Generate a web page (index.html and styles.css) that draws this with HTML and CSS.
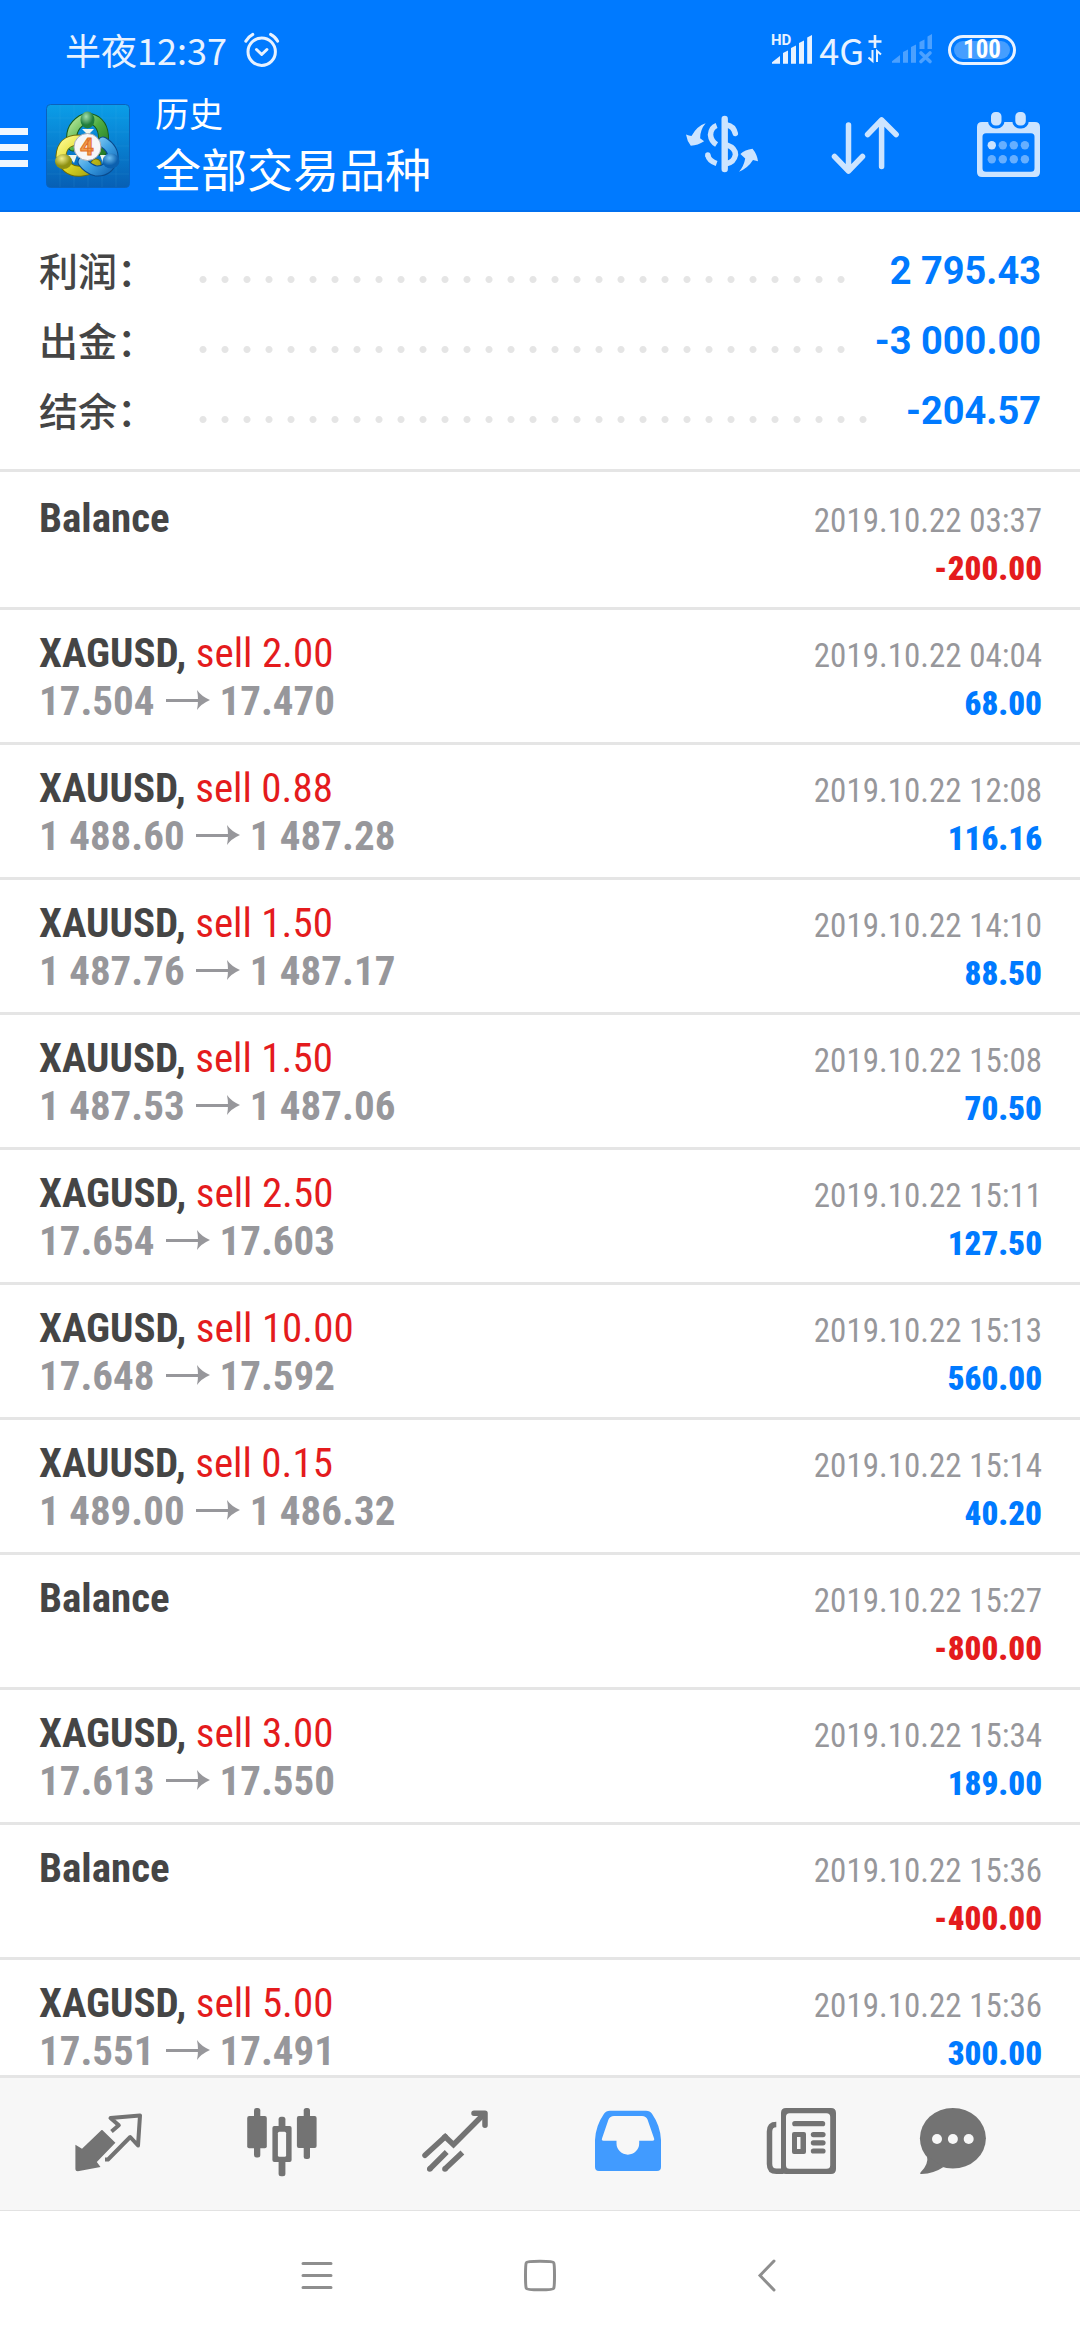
FILE: index.html
```html
<!DOCTYPE html>
<html lang="zh-CN">
<head>
<meta charset="utf-8">
<meta name="viewport" content="width=device-width, initial-scale=1">
<title>历史 - 全部交易品种</title>
<link rel="stylesheet" href="styles.css">
</head>
<body>
<svg class="defs" aria-hidden="true">
  <symbol id="arrow" viewBox="0 0 44 20"><path d="M0 9h34v3H0z"/><path d="M31 0q4 6 13 10q-9 4-13 10q2-10 0-20z"/></symbol>
</svg>

<header class="top">
  <div class="status">
    <span class="clock">半夜12:37</span>
    <svg class="alarm" width="36" height="36" viewBox="0 0 36 36" fill="none" stroke="#e8f2ff" stroke-width="3" stroke-linecap="round" stroke-linejoin="round">
      <circle cx="17.7" cy="19.7" r="13.7"/><path d="M1.8 9.2Q4 5 8.8 2.4M26.6 2.4Q31.500 5 33.600 9.200M12.500 17.500l5.200 5 5.200-5"/>
    </svg>
    <div class="signals">
      <svg class="signal" width="42" height="34" viewBox="0 -2 42 34" fill="#e8f2ff">
        <text class="hd" x="0" y="10">HD</text>
        <path d="M1 28.700v-1.500l8-6.200v7.700zM12 28.700V18l5-2.500v13.200zM20 28.700V13l5-2.500v18.200zM28 28.700V8l5-2.500v23.200zM36.200 28.700V2.500L41 0v28.700z"/>
      </svg>
      <span class="net">4G</span>
      <svg class="updown" width="14" height="32" viewBox="0 0 14 32" fill="none" stroke="#e8f2ff">
        <path stroke-width="2.600" d="M7 1v13M0.500 7.500h13"/><path stroke-width="2" d="M4.500 16v11l-4-3.500M9 28V17l4 3.500"/>
      </svg>
      <svg class="nosim" width="42" height="32" viewBox="0 0 42 32" fill="#4ca1ff">
        <path d="M0 28.700v-1.500l8-6.200v7.700zM11 28.700V18l5-2.500v13.200zM19 28.700V13l5-2.500v18.200zM27.500 15V8l5-2.500V15zM35.500 15V2.500L40 0v15z"/>
        <path d="M29 19l9 8.500M38 19l-9 8.500" fill="none" stroke="#4ca1ff" stroke-width="3.600" stroke-linecap="round"/>
      </svg>
      <span class="battery"><span class="charge">100</span></span>
    </div>
  </div>

  <div class="appbar">
    <button class="menu" aria-label="菜单"><i></i><i></i><i></i></button>
    <svg class="logo" width="84" height="84" viewBox="0 0 84 84">
      <defs>
        <linearGradient id="sky" x2="0" y2="1"><stop offset="0" stop-color="#0b9ee8"/><stop offset=".5" stop-color="#087fd0"/><stop offset="1" stop-color="#075fb4"/></linearGradient>
        <linearGradient id="gr" x2="1" y2="1"><stop offset="0" stop-color="#b4e69a"/><stop offset=".5" stop-color="#4fae42"/><stop offset="1" stop-color="#267d28"/></linearGradient>
        <linearGradient id="ye" x2="1" y2="1"><stop offset="0" stop-color="#fbf88a"/><stop offset=".5" stop-color="#e0d926"/><stop offset="1" stop-color="#a5a210"/></linearGradient>
        <linearGradient id="bl" x2="1" y2="1"><stop offset="0" stop-color="#a5dbf8"/><stop offset=".5" stop-color="#3fa2e4"/><stop offset="1" stop-color="#1268b8"/></linearGradient>
        <radialGradient id="gh" cx=".4" cy=".3"><stop offset="0" stop-color="#a2dfae"/><stop offset="1" stop-color="#1f7d3c"/></radialGradient>
        <radialGradient id="yh" cx=".4" cy=".3"><stop offset="0" stop-color="#f2f08c"/><stop offset="1" stop-color="#8f9112"/></radialGradient>
        <radialGradient id="bh" cx=".4" cy=".3"><stop offset="0" stop-color="#6fc0f2"/><stop offset="1" stop-color="#0c60ae"/></radialGradient>
      </defs>
      <rect x=".5" y=".5" width="83" height="83" rx="4" fill="url(#sky)" stroke="#0a62bd"/>
      <path d="M14 1v82M28 1v82M42 1v82M56 1v82M70 1v82M1 14h82M1 28h82M1 42h82M1 56h82M1 70h82" stroke="#5ab8f0" stroke-opacity=".12"/>
      <g fill="none" stroke-linecap="round">
        <path d="M27 42Q22 25 36 16Q42 12 50 17Q61 25 56 47" stroke="#175c1c" stroke-width="11"/>
        <path d="M27 42Q22 25 36 16Q42 12 50 17Q61 25 56 47" stroke="url(#gr)" stroke-width="9"/>
        <path d="M33 36Q16 36 15 52Q20 69 36 67Q46 66 50 60" stroke="#706d06" stroke-width="11"/>
        <path d="M33 36Q16 36 15 52Q20 69 36 67Q46 66 50 60" stroke="url(#ye)" stroke-width="9"/>
        <path d="M57 38Q68 45 67 55Q62 68 50 67Q42 65 37 58" stroke="#0a4a8c" stroke-width="11"/>
        <path d="M57 38Q68 45 67 55Q62 68 50 67Q42 65 37 58" stroke="url(#bl)" stroke-width="9"/>
      </g>
      <path d="M36 25h12l-6 6zM22 51l9 0-3 8zM62 51h-8l3 8z" fill="#eef6ee"/>
      <ellipse cx="41.500" cy="16" rx="7" ry="8.500" fill="url(#gh)"/>
      <ellipse cx="17.500" cy="57.500" rx="8.500" ry="7.500" fill="url(#yh)"/>
      <ellipse cx="65" cy="57" rx="8.500" ry="7.500" fill="url(#bh)"/>
      <circle cx="41.500" cy="43" r="13.500" fill="#f6f6f8" stroke="#a9acb4"/>
      <text class="four" x="41" y="51" text-anchor="middle">4</text>
    </svg>
    <div class="title">
      <h1>历史</h1>
      <p>全部交易品种</p>
    </div>
    <div class="actions">
      <button aria-label="货币">
        <svg width="143" height="120" viewBox="0 0 143 120" fill="#cce4ff">
          <path d="M35 42.500q3 1 5.500 1.500Q46 34 54.600 31.300Q49 38 49.100 46.300l4 3Q47 53.500 39.800 53.700Q36 49 35 42.500z"/>
          <path d="M88 79.700Q93 74 94.200 66.500L89.400 62Q94 57.500 101.500 56.700Q106 62 107 69.300L102 68Q97 76 88 79.700z"/>
          <path d="M65.600 33.500Q60 35.500 59.500 42.700Q60 49 65.600 52.500M56.700 63Q58 69 65.600 71.500" fill="none" stroke="#cce4ff" stroke-width="5.500"/>
          <circle cx="56.800" cy="63" r="2.700"/>
          <path d="M73.700 27v50" stroke="#cce4ff" stroke-width="6.400" stroke-linecap="round"/>
          <path d="M76 33Q82.500 34 84.300 41.500M76 53Q84.500 56 84.500 62.700Q83 70 76 71.500" fill="none" stroke="#cce4ff" stroke-width="5.500" stroke-linecap="round"/>
        </svg>
      </button>
      <button aria-label="排序">
        <svg width="143" height="120" viewBox="0 0 143 120" fill="none" stroke="#cce4ff" stroke-width="5.500" stroke-linecap="round" stroke-linejoin="round">
          <path d="M54.500 33v46M40.500 64.500l14 14.500 14-14.500M87.600 74.500V28M73.600 42.500L87.600 28l14.500 14.500"/>
        </svg>
      </button>
      <button aria-label="日历">
        <svg width="143" height="120" viewBox="0 0 143 120" fill="#cce4ff">
          <path fill-rule="evenodd" d="M45 30h53q5 0 5 5v45q0 5-5 5H45q-5 0-5-5V35q0-5 5-5zM49 41.300q-3.500 0-3.500 3.500v31.500q0 3.500 3.500 3.500h45q3.500 0 3.500-3.500V44.800q0-3.500-3.500-3.500z"/>
          <rect x="52.500" y="18.500" width="13.500" height="16.500" rx="6" stroke="#007aff" stroke-width="3"/>
          <rect x="76.800" y="18.500" width="13.500" height="16.500" rx="6" stroke="#007aff" stroke-width="3"/>
          <circle cx="54.800" cy="53.300" r="4.200"/>
          <g fill="#66afff"><circle cx="65.800" cy="53.300" r="4.200"/><circle cx="76.800" cy="53.300" r="4.200"/><circle cx="87.900" cy="53.300" r="4.200"/><circle cx="54.800" cy="67.300" r="4.200"/><circle cx="65.800" cy="67.300" r="4.200"/><circle cx="76.800" cy="67.300" r="4.200"/><circle cx="87.900" cy="67.300" r="4.200"/></g>
        </svg>
      </button>
    </div>
  </div>
</header>

<main class="history">
  <dl class="summary">
    <div><dt>利润：</dt><dd><span class="dots"></span><b>2 795.43</b></dd></div>
    <div><dt>出金：</dt><dd><span class="dots"></span><b>-3 000.00</b></dd></div>
    <div><dt>结余：</dt><dd><span class="dots"></span><b>-204.57</b></dd></div>
  </dl>

  <ul class="deals">
    <li><p><b>Balance</b><time>2019.10.22 03:37</time></p><p class="out"><span>&nbsp;</span><strong class="loss">-200.00</strong></p></li>
    <li><p><span><b>XAGUSD,</b> <em>sell 2.00</em></span><time>2019.10.22 04:04</time></p><p class="out"><span>17.504<svg><use href="#arrow"/></svg>17.470</span><strong>68.00</strong></p></li>
    <li><p><span><b>XAUUSD,</b> <em>sell 0.88</em></span><time>2019.10.22 12:08</time></p><p class="out"><span>1 488.60<svg><use href="#arrow"/></svg>1 487.28</span><strong>116.16</strong></p></li>
    <li><p><span><b>XAUUSD,</b> <em>sell 1.50</em></span><time>2019.10.22 14:10</time></p><p class="out"><span>1 487.76<svg><use href="#arrow"/></svg>1 487.17</span><strong>88.50</strong></p></li>
    <li><p><span><b>XAUUSD,</b> <em>sell 1.50</em></span><time>2019.10.22 15:08</time></p><p class="out"><span>1 487.53<svg><use href="#arrow"/></svg>1 487.06</span><strong>70.50</strong></p></li>
    <li><p><span><b>XAGUSD,</b> <em>sell 2.50</em></span><time>2019.10.22 15:11</time></p><p class="out"><span>17.654<svg><use href="#arrow"/></svg>17.603</span><strong>127.50</strong></p></li>
    <li><p><span><b>XAGUSD,</b> <em>sell 10.00</em></span><time>2019.10.22 15:13</time></p><p class="out"><span>17.648<svg><use href="#arrow"/></svg>17.592</span><strong>560.00</strong></p></li>
    <li><p><span><b>XAUUSD,</b> <em>sell 0.15</em></span><time>2019.10.22 15:14</time></p><p class="out"><span>1 489.00<svg><use href="#arrow"/></svg>1 486.32</span><strong>40.20</strong></p></li>
    <li><p><b>Balance</b><time>2019.10.22 15:27</time></p><p class="out"><span>&nbsp;</span><strong class="loss">-800.00</strong></p></li>
    <li><p><span><b>XAGUSD,</b> <em>sell 3.00</em></span><time>2019.10.22 15:34</time></p><p class="out"><span>17.613<svg><use href="#arrow"/></svg>17.550</span><strong>189.00</strong></p></li>
    <li><p><b>Balance</b><time>2019.10.22 15:36</time></p><p class="out"><span>&nbsp;</span><strong class="loss">-400.00</strong></p></li>
    <li><p><span><b>XAGUSD,</b> <em>sell 5.00</em></span><time>2019.10.22 15:36</time></p><p class="out"><span>17.551<svg><use href="#arrow"/></svg>17.491</span><strong>300.00</strong></p></li>
  </ul>
</main>

<nav class="tabs">
  <button aria-label="行情">
    <svg viewBox="0 0 90 90">
      <path d="M38.300 31L51.400 43.700 32.800 63l3.700 5L13.800 72.300q-2.400 0-2.400-2V45.700L18 49.700 36.500 32q1-1.500 1.800-1z" fill="#737373"/>
      <path d="M47.500 32.500l7.300-6.200-8.300-7.300 29.500-2.500-2 30-7.800-8.500L44 60.500l-3 0" fill="none" stroke="#737373" stroke-width="4" stroke-linejoin="round"/>
    </svg>
  </button>
  <button aria-label="图表">
    <svg viewBox="0 0 90 90" fill="#737373">
      <rect x="17" y="9" width="6.300" height="49.500" rx="2.500"/><rect x="10.200" y="17" width="19.600" height="32.300" rx="2"/>
      <rect x="66.700" y="9" width="6.300" height="51" rx="2.500"/><rect x="59.900" y="17" width="19.700" height="32" rx="2"/>
      <rect x="41.600" y="17.700" width="6.800" height="59.500" rx="2.500"/><rect x="35.400" y="27" width="19.200" height="36" rx="2"/>
      <rect x="40.900" y="32.700" width="8.200" height="25" rx="1.500" fill="#f7f7f7"/>
    </svg>
  </button>
  <button aria-label="交易">
    <svg viewBox="0 0 90 90" fill="none" stroke="#737373" stroke-width="5.500">
      <path stroke-linecap="round" d="M15 56.300l20.200-18.600"/>
      <path d="M33.500 39.300l1.700-1.600 8.300 8L73.500 15.500"/>
      <path stroke-linecap="round" stroke-linejoin="round" d="M64 14.300h11v12"/>
      <path d="M19.700 70l17-17M34.900 70l17.500-16.500"/><path stroke-linecap="round" d="M19.700 70h.1M34.900 70h.1"/>
    </svg>
  </button>
  <button aria-label="历史" aria-current="page">
    <svg viewBox="0 0 90 90" fill="#419bff">
      <path fill-rule="evenodd" d="M27 11.700h36q4 0 6 3Q77.500 27 78 41v27q0 4-4 4H16q-4 0-4-4V41Q12.500 27 21 14.700q2-3 6-3zM31 17q-4 0-5.500 3.500L19 39.500q-.7 2.200 1.500 2.200h13v2.600a11.300 11.300 0 0 0 22.700 0v-2.600h13.300q2.200 0 1.600-2.200L64.500 20.500Q63 17 59 17z"/>
    </svg>
  </button>
  <button aria-label="新闻">
    <svg viewBox="0 0 90 90" fill="#737373">
      <path fill-rule="evenodd" d="M30 9h45q5 0 5 5v56q0 5-5 5H30q-5 0-5-5V14q0-5 5-5zM33.500 14.300q-3.500 0-3.500 3.500v48.400q0 3.500 3.500 3.500h37q3.700 0 3.700-3.500V17.800q0-3.500-3.700-3.500z"/>
      <path d="M20.300 25.500q-6.800 0-6.800 7V65q0 7.300 7 7.300h7" fill="none" stroke="#737373" stroke-width="5.500"/>
      <rect x="36.200" y="22" width="33" height="5.300" rx="2.600"/>
      <path fill-rule="evenodd" d="M38 33h10q2 0 2 2v18q0 2-2 2H38q-2 0-2-2V35q0-2 2-2zM41 38v12h3.500V38z"/>
      <rect x="54.800" y="33" width="14.800" height="5.200" rx="2.600"/><rect x="54.800" y="41.200" width="14.800" height="5.200" rx="2.600"/><rect x="54.800" y="49.400" width="14.800" height="5.200" rx="2.600"/>
    </svg>
  </button>
  <button aria-label="聊天">
    <svg viewBox="0 0 90 90" fill="#737373">
      <ellipse cx="44.900" cy="39.300" rx="33" ry="30.300"/>
      <path d="M19 57q2 8-6.500 16.500-1 1.500 1 1.500Q26 74.500 35.500 68z"/>
      <g fill="#f7f7f7"><circle cx="29" cy="40" r="5"/><circle cx="44.900" cy="40" r="5"/><circle cx="60.700" cy="40" r="5"/></g>
    </svg>
  </button>
</nav>

<nav class="system">
  <button aria-label="最近任务"><svg viewBox="0 0 48 48"><path d="M12 11.500h28M12 23.500h28M12 35.500h28"/></svg></button>
  <button aria-label="主屏幕"><svg viewBox="0 0 48 48"><path d="M24 9.300Q37 9.300 37.700 10.700Q38.500 12 38.500 23.500T37.700 36.300Q37 37.800 24 37.800T10.300 36.300Q9.500 35 9.500 23.500T10.300 10.700Q11 9.300 24 9.300z"/></svg></button>
  <button aria-label="返回"><svg viewBox="0 0 48 48"><path d="M33 9L19 23.500 33 38"/></svg></button>
</nav>
</body>
</html>
```

FILE: styles.css
```css
* { box-sizing: border-box; margin: 0; padding: 0; }

body {
  display: flex;
  flex-direction: column;
  height: 100vh;
  background: #fff;
  color: #454545;
  font-family: Roboto, "Noto Sans CJK SC", sans-serif;
}

button { border: 0; background: none; font: inherit; color: inherit; cursor: pointer; }
svg { display: block; }
.defs { position: absolute; width: 0; height: 0; }

/* header */
.top { flex: none; background: #007aff; color: #fff; border-bottom: 2px solid #0070f0; }

.status {
  display: flex;
  align-items: center;
  height: 92px;
  padding: 7px 64px 0 65px;
  color: #e8f2ff;
}
.clock { padding-bottom: 2px; font: 36px/40px "Noto Sans CJK SC", sans-serif; }
.alarm { margin-left: 17px; }
.signals { display: flex; align-items: center; margin-left: auto; }
.signal { overflow: visible; }
.hd { font: bold 15px Roboto, sans-serif; }
.net { margin: 0 4px 0 6px; padding-bottom: 2px; font: 36px/40px "Noto Sans CJK SC", sans-serif; }
.nosim { margin-left: 10px; }
.battery {
  width: 68px;
  height: 30px;
  margin-left: 14px;
  padding: 3px;
  border: 3px solid #e8f2ff;
  border-radius: 15px;
}
.charge {
  display: block;
  height: 18px;
  border-radius: 9px;
  background: #459eff;
  color: #fff;
  font: bold 25px/18px "Roboto Condensed", Roboto, sans-serif;
  text-align: center;
}

.appbar { display: flex; align-items: flex-start; height: 118px; }
.menu { display: grid; gap: 9px; width: 28px; margin-right: 18px; padding-top: 36px; }
.menu i { display: block; height: 7px; background: #f0f7ff; }
.logo { margin-top: 12px; }
.four { font: bold 24px Roboto, sans-serif; fill: #f3a04a; stroke: #e0702a; }
.title { flex: 1; margin-left: 25px; font-family: "Noto Sans CJK SC", sans-serif; }
.title h1 { font-size: 34px; font-weight: 400; line-height: 42px; }
.title p { font-size: 46px; line-height: 66px; }
.actions { display: flex; }

/* totals */
.history { flex: 1; min-height: 0; overflow: hidden; }
.summary { padding: 24px 39px 23px; border-bottom: 3px solid #e5e5e5; }
.summary div { display: flex; height: 70px; }
.summary dt { width: 153px; font: 500 39px/66px "Noto Sans CJK SC", sans-serif; }
.summary dd { flex: 1; display: flex; align-items: center; gap: 18px; }
.dots { flex: 1; padding-top: 16px; }
.dots::before {
  content: "";
  display: block;
  width: round(down, 100%, 22px);
  height: 7px;
  background: radial-gradient(circle at 11px 50%, #e5e5e5 3px, transparent 4px) 0 0 / 22px 7px;
}
.summary b { color: #007aff; font-size: 38px; font-weight: 700; line-height: 70px; }

/* deals */
.deals { list-style: none; padding-top: 3px; font-family: "Roboto Condensed", "Liberation Sans Narrow", Roboto, sans-serif; }
.deals li { height: 135px; padding: 19px 38px 0 39px; border-bottom: 3px solid #e5e5e5; }
.deals p { display: flex; align-items: baseline; justify-content: space-between; height: 48px; font-size: 41px; line-height: 48px; }
.deals em { color: #e41b1d; font-style: normal; }
.deals time { color: #97979b; font-size: 33px; line-height: 38px; }
.deals .out { color: #97979b; font-weight: 700; }
.deals strong { color: #007aff; font-size: 33px; line-height: 38px; }
.deals .loss { color: #e41b1d; }
.deals svg { display: inline-block; width: 44px; height: 20px; margin: 0 10px 5px 11px; fill: #97979b; }

/* tab bar */
.tabs {
  flex: none;
  display: grid;
  grid-template-columns: repeat(5, 173fr) 132fr;
  padding: 0 61px 0 22px;
  border-top: 3px solid #e5e5e5;
  background: #f7f7f7;
}
.tabs button { display: grid; place-items: center; height: 132px; }
.tabs svg { width: 90px; height: 90px; }

/* system keys */
.system { flex: none; display: flex; justify-content: center; height: 130px; border-top: 1px solid #e2e2e2; }
.system button { display: grid; place-items: center; width: 225px; }
.system svg { width: 48px; height: 48px; fill: none; stroke: #8e8e8e; stroke-width: 3px; stroke-linecap: round; }
```
